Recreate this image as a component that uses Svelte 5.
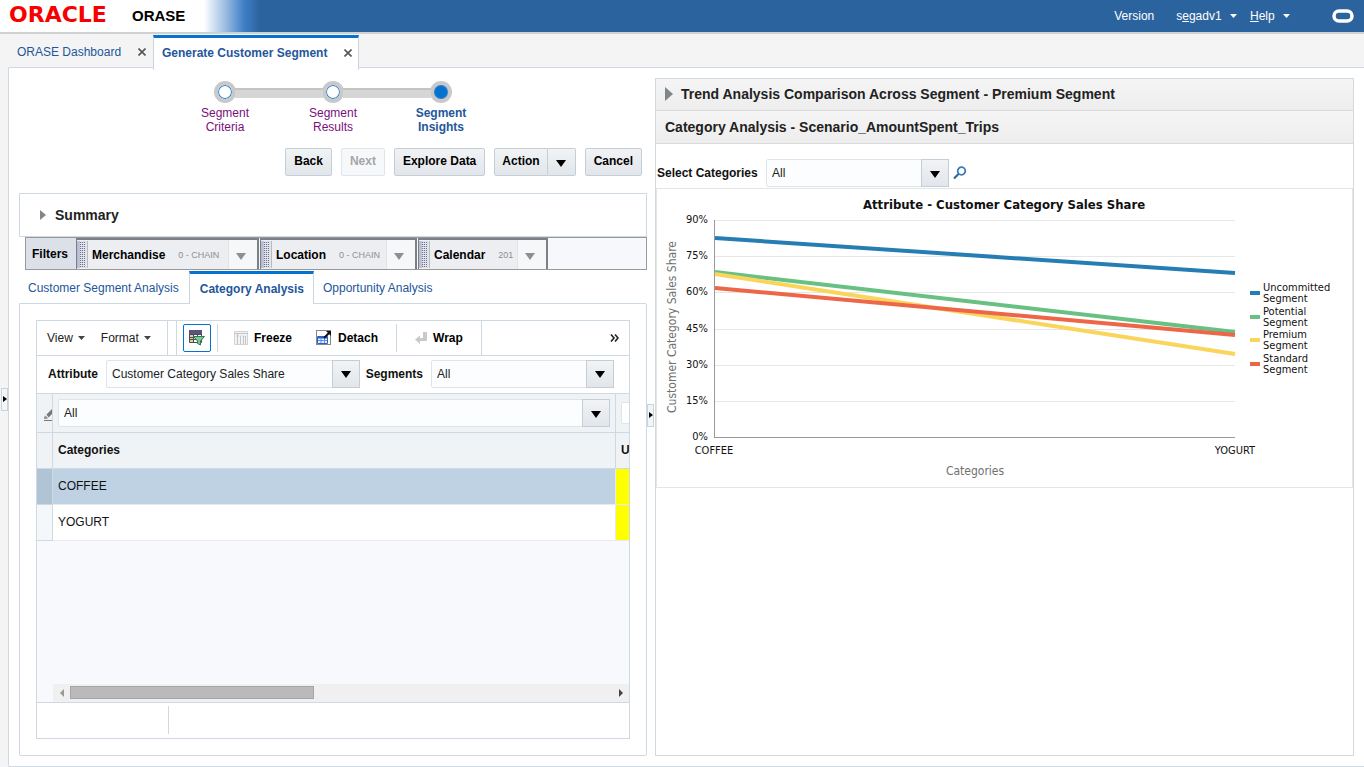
<script lang="ts">
  const steps = [
    { lines: ['Segment', 'Criteria'], current: false },
    { lines: ['Segment', 'Results'], current: false },
    { lines: ['Segment', 'Insights'], current: true },
  ];

  const filters = [
    { name: 'Merchandise', value: '0 - CHAIN', size: 'wide' },
    { name: 'Location', value: '0 - CHAIN', size: 'medium' },
    { name: 'Calendar', value: '201', size: 'narrow' },
  ];

  const subTabs = ['Customer Segment Analysis', 'Category Analysis', 'Opportunity Analysis'];
  let activeTab = $state('Category Analysis');

  const categories = ['COFFEE', 'YOGURT'];
  let selectedCategory = $state('COFFEE');

  // chart geometry
  const left = 58;
  const right = 578;
  const bottom = 248;
  const plotHeight = 217;
  const ticks = [90, 75, 60, 45, 30, 15, 0];

  const series = [
    { name: 'Uncommitted', color: '#267db3', values: [82.7, 68.2], y: 102 },
    { name: 'Potential', color: '#68c182', values: [68.6, 43.6], y: 126 },
    { name: 'Premium', color: '#fad55c', values: [67.8, 34.6], y: 149 },
    { name: 'Standard', color: '#ed6647', values: [62, 42.5], y: 173 },
  ];

  function toY(v: number): number {
    return Math.round(bottom - (v / 90) * plotHeight);
  }
</script>

{#snippet caret()}
  <svg class="caret" width="7" height="4" viewBox="0 0 7 4"><path d="M0 0h7L3.500 4z" fill="currentColor" /></svg>
{/snippet}

{#snippet arrow()}
  <svg width="10" height="7" viewBox="0 0 10 7"><path d="M0 0h10L5 7z" fill="currentColor" /></svg>
{/snippet}

{#snippet combo(id: string, value: string, label: string)}
  <div class="combo">
    <select {id} aria-label={label}><option>{value}</option></select>
    <span class="combo-arrow">{@render arrow()}</span>
  </div>
{/snippet}

<div class="page">
  <header>
    <span class="logo">ORACLE</span>
    <span class="product">ORASE</span>
    <nav>
      <a href="#version">Version</a>
      <a href="#user">s<u>e</u>gadv1 {@render caret()}</a>
      <a href="#help"><u>H</u>elp {@render caret()}</a>
      <svg class="ring" width="22" height="14" viewBox="0 0 22 14"><rect x="2" y="2" width="18" height="10" rx="5" fill="none" stroke="#fff" stroke-width="3.500" /></svg>
    </nav>
  </header>

  <div class="tabs">
    <div class="tab">
      <a href="#dashboard">ORASE Dashboard</a>
      <button class="close" aria-label="Close ORASE Dashboard"><svg width="8" height="8" viewBox="0 0 8 8"><path d="M.5.5l7 7M7.500.5l-7 7" stroke="#555" stroke-width="1.600" /></svg></button>
    </div>
    <div class="tab active">
      <a href="#segment">Generate Customer Segment</a>
      <button class="close" aria-label="Close Generate Customer Segment"><svg width="8" height="8" viewBox="0 0 8 8"><path d="M.5.5l7 7M7.500.5l-7 7" stroke="#555" stroke-width="1.600" /></svg></button>
    </div>
  </div>

  <div class="body">
    <div class="rail">
      <button class="handle" aria-label="Expand side panel"><svg width="4" height="6" viewBox="0 0 4 6"><path d="M0 0v6l4-3z" /></svg></button>
    </div>

    <main>
      <section class="left">
        <ol class="train">
          {#each steps as step}
            <li class:current={step.current}>
              <span class="stop"></span>
              <a href="#step">{step.lines[0]}<br />{step.lines[1]}</a>
            </li>
          {/each}
        </ol>

        <div class="actions">
          <button class="btn">Back</button>
          <button class="btn" disabled>Next</button>
          <button class="btn">Explore Data</button>
          <div class="split">
            <button class="btn">Action</button>
            <button class="btn drop" aria-label="More actions">{@render arrow()}</button>
          </div>
          <button class="btn">Cancel</button>
        </div>

        <div class="summary">
          <svg width="6" height="10" viewBox="0 0 6 10"><path d="M0 0v10l6-5z" fill="#80868a" /></svg>
          <h2>Summary</h2>
        </div>

        <div class="filters">
          <span class="filters-title">Filters</span>
          {#each filters as f}
            <div class="chip {f.size}">
              <span class="grip"></span>
              <b>{f.name}</b>
              <span class="chip-value">{f.value}</span>
              <button class="chip-drop" aria-label="Choose {f.name}">{@render arrow()}</button>
            </div>
          {/each}
        </div>

        <div class="subtabs">
          {#each subTabs as tab}
            <button class:active={tab === activeTab} onclick={() => (activeTab = tab)}>{tab}</button>
          {/each}
        </div>

        <div class="tab-panel">
          <div class="grid-box">
            <div class="toolbar">
              <div class="menus">
                <button>View {@render caret()}</button>
                <button>Format {@render caret()}</button>
              </div>
              <div class="tools">
                <button class="qbe" aria-label="Query by example">
                  <svg width="16" height="16" viewBox="0 0 16 16">
                    <path d="M.5.5h12v12H.5z" fill="#fff" stroke="#4b4a68" />
                    <path d="M0 0h13v4H0z" fill="#56567c" />
                    <path d="M1 5h3v2H1zM1 8h3v1H1zM1 10h3v2H1z" fill="#e3d27c" />
                    <path d="M1 4.500h12M1 7.500h12M1 9.500h9M4.500 4v9M8.500 4v9" stroke="#4b4a68" />
                    <path d="M4.500 6.500h11L11.500 11v4L8.500 13.500V11z" fill="#7cc79a" stroke="#347c50" />
                  </svg>
                </button>
                <button class="tool freeze">
                  <svg width="14" height="14" viewBox="0 0 14 14">
                    <path d="M.5.5h13v13H.5z" fill="#f4f4f4" stroke="#d2d2d2" />
                    <path d="M0 2.500h14M3.500 3v10M6.500 5v8M9.500 5v8M11.500 5v8" stroke="#c5c5c5" />
                    <path d="M2 5h10" stroke="#ccc" stroke-dasharray="1 1" />
                  </svg>
                  Freeze
                </button>
                <button class="tool">
                  <svg width="16" height="16" viewBox="0 0 16 16">
                    <path d="M.5.5h14v14H.5z" fill="#fff" stroke="#111" stroke-dasharray="1 1" />
                    <path d="M1.500 6.500h10v7h-10z" fill="#e4efff" stroke="#2a62c4" />
                    <path d="M2 7.500h9" stroke="#2a62c4" stroke-width="2" />
                    <path d="M2 10.500h9M5 8v5M8.500 8v5" stroke="#5d8ee0" />
                    <path d="M8 8l5-5" stroke="#111" stroke-width="2" />
                    <path d="M10 1h5v5z" fill="#111" />
                  </svg>
                  Detach
                </button>
                <button class="tool wrap">
                  <svg width="12" height="14" viewBox="0 0 12 14"><path d="M8 1h4v9H5v3L0 8.500 5 4.500V7h3z" fill="#c9c9c9" /></svg>
                  Wrap
                </button>
              </div>
              <button class="more" aria-label="More tools">
                <svg width="9" height="8" viewBox="0 0 9 8"><path d="M1 .5L4 4 1 7.500M5 .5L8 4 5 7.500" fill="none" stroke="#222" stroke-width="1.600" /></svg>
              </button>
            </div>

            <div class="selectors">
              <label for="attribute">Attribute</label>
              {@render combo('attribute', 'Customer Category Sales Share', 'Attribute')}
              <label for="segments">Segments</label>
              <div class="segments">{@render combo('segments', 'All', 'Segments')}</div>
            </div>

            <div class="table-area">
              <table>
                <colgroup>
                  <col class="gutter" />
                  <col />
                  <col class="peek" />
                </colgroup>
                <thead>
                  <tr class="query">
                    <td class="eraser">
                      <svg width="8" height="13" viewBox="0 0 8 13"><path d="M0 11.500h8" stroke="#777" /><path d="M0 8l1.500-1.500L4 9l-1 1H0z" fill="#999" /><path d="M2.500 5.500L8 0v5L4.500 8.500z" fill="#777" /></svg>
                    </td>
                    <td>{@render combo('category-query', 'All', 'Filter categories')}</td>
                    <td><input class="peek-input" aria-label="Filter segment" /></td>
                  </tr>
                  <tr>
                    <th></th>
                    <th>Categories</th>
                    <th>U</th>
                  </tr>
                </thead>
                <tbody>
                  {#each categories as c}
                    <tr class:selected={c === selectedCategory} onclick={() => (selectedCategory = c)}>
                      <td></td>
                      <td>{c}</td>
                      <td class="flag"></td>
                    </tr>
                  {/each}
                </tbody>
              </table>
              <div class="scrollbar">
                <button aria-label="Scroll left"><svg width="4" height="8" viewBox="0 0 4 8"><path d="M4 0v8L0 4z" fill="#999" /></svg></button>
                <div class="track"><div class="thumb"></div></div>
                <button aria-label="Scroll right"><svg width="4" height="8" viewBox="0 0 4 8"><path d="M0 0v8l4-4z" fill="#444" /></svg></button>
              </div>
            </div>

            <div class="status"><span></span></div>
          </div>
        </div>
      </section>

      <div class="splitter">
        <button class="handle" aria-label="Collapse panel"><svg width="4" height="6" viewBox="0 0 4 6"><path d="M0 0v6l4-3z" /></svg></button>
      </div>

      <section class="right">
        <div class="panel-head">
          <svg width="8" height="14" viewBox="0 0 8 14"><path d="M0 0v14l8-7z" fill="#80868a" /></svg>
          <h2>Trend Analysis Comparison Across Segment - Premium Segment</h2>
        </div>
        <div class="panel-head">
          <h2>Category Analysis - Scenario_AmountSpent_Trips</h2>
        </div>
        <div class="picker">
          <label for="categories">Select Categories</label>
          {@render combo('categories', 'All', 'Select Categories')}
          <button class="search" aria-label="Search">
            <svg width="14" height="14" viewBox="0 0 14 14"><circle cx="8.500" cy="5" r="3.800" fill="#fff" stroke="#3d79b8" stroke-width="1.800" /><path d="M5.500 8L1 12.500" stroke="#2c66a5" stroke-width="2.200" /></svg>
          </button>
        </div>

        <div class="chart">
          <svg viewBox="0 0 695 298" role="img" aria-label="Customer Category Sales Share by category">
            <text class="title" x="347" y="20" text-anchor="middle">Attribute - Customer Category Sales Share</text>
            {#each ticks as t}
              <line x1={left} x2={right} y1={toY(t) + 0.5} y2={toY(t) + 0.5} stroke={t === 0 ? '#999' : '#e6e6e6'} />
              <text x="51" y={toY(t) + 3} text-anchor="end">{t}%</text>
            {/each}
            <line x1="57.5" x2="57.5" y1="31" y2="249" stroke="#999" />
            {#each series as s}
              <line x1={left} x2={right} y1={toY(s.values[0])} y2={toY(s.values[1])} stroke={s.color} stroke-width="4" />
            {/each}
            <text x="57" y="265" text-anchor="middle">COFFEE</text>
            <text x="578" y="265" text-anchor="middle">YOGURT</text>
            <text class="axis" x="318" y="286" text-anchor="middle">Categories</text>
            <text class="axis" transform="translate(19 138) rotate(-90)" text-anchor="middle">Customer Category Sales Share</text>
            {#each series as s}
              <rect x="593" y={s.y} width="10" height="4" fill={s.color} />
              <text x="606" y={s.y}>{s.name}</text>
              <text x="606" y={s.y + 11}>Segment</text>
            {/each}
          </svg>
        </div>
      </section>
    </main>
  </div>
</div>

<style>
  :global(body) { background: #f4f4f4; }
  .page { min-height: 100vh; display: flex; flex-direction: column; font: 12px/14px "Liberation Sans", Arial, sans-serif; color: #222; }
  .page :global(*) { box-sizing: border-box; }
  button, select, input { font: inherit; color: inherit; margin: 0; padding: 0; border: 0; background: none; }
  button { cursor: pointer; display: inline-flex; align-items: center; justify-content: center; }
  a { text-decoration: none; }
  h2 { margin: 0; font-size: 14px; line-height: 16px; }
  svg { display: block; flex: none; }
  label { font-weight: bold; color: #111; white-space: nowrap; }

  header { height: 34px; display: flex; align-items: center; padding: 0 10px 0 9px; border-bottom: 2px solid #cfd0d2; background: linear-gradient(to right, #fff 204px, #8fb4de 228px, #3f7fc6 244px, #2b639e 260px); }
  .logo { width: 123px; padding-bottom: 2px; font: bold 22px/28px "DejaVu Sans", sans-serif; color: #f80000; }
  .product { font-size: 15px; line-height: 18px; font-weight: bold; color: #000; }
  nav { flex: 1; display: flex; align-items: center; justify-content: flex-end; gap: 13px; color: #fff; }
  nav a { display: flex; align-items: center; color: #fff; white-space: pre; }
  nav a:first-child { margin-right: 9px; }
  nav .ring { margin-left: 29px; }
  .caret { margin-left: 5px; display: inline-block; }

  .tabs { display: flex; height: 33px; padding-left: 9px; }
  .tab { display: flex; align-items: center; justify-content: space-between; width: 144px; padding: 3px 6px 0 8px; }
  .tab.active { width: 206px; height: 35px; margin-top: 1px; padding: 0 5px 3px 8px; background: #fff; border: 1px solid #c9d6e2; border-top: 3px solid #0572ce; border-bottom: 0; font-weight: bold; z-index: 1; }
  .tab a { color: #24569b; white-space: nowrap; }
  .close { width: 10px; height: 12px; }

  .body { flex: 1; display: flex; }
  .rail { width: 8px; display: flex; align-items: center; justify-content: flex-end; padding-bottom: 36px; }
  .handle { width: 7px; height: 23px; background: #f3f5f7; border: 1px solid #c9d3dc; }
  main { flex: 1; display: grid; grid-template-columns: minmax(0, 628fr) 8px minmax(0, 699fr); padding: 10px 10px 10px 10px; background: #fff; border: 1px solid #ced9e3; border-right: 0; border-radius: 2px 0 0 2px; }
  .splitter { display: flex; align-items: center; padding-bottom: 4px; }

  .left { display: flex; flex-direction: column; }
  .train { display: flex; justify-content: center; list-style: none; margin: 3px 0 0; padding: 0; }
  .train li { position: relative; width: 108px; text-align: center; display: flex; flex-direction: column; align-items: center; gap: 4px; }
  .train li + li::before { content: ""; position: absolute; right: 64px; top: 7px; width: 88px; height: 8px; background: #d6d6d6; border-top: 2px solid #c4c4c4; }
  .stop { width: 22px; height: 22px; border: 4px solid #c9c9c9; border-radius: 50%; background: #fff; box-shadow: inset 0 0 0 1px #2a82d4; }
  .current .stop { background: #0572ce; }
  .train li { gap: 3px; }
  .train a { color: #7a0f7c; }
  .train .current a { color: #24569b; font-weight: bold; }

  .actions { display: flex; justify-content: flex-end; gap: 9px; padding: 14px 5px 0 0; }
  .btn { height: 28px; padding: 0 8px 2px; border: 1px solid #c4ced7; border-radius: 2px; background: linear-gradient(#f1f3f5, #e2e6ea); color: #000; font-weight: bold; white-space: nowrap; }
  .btn:disabled { color: #a5a7a9; background: #f6f8f9; border-color: #dfe5ea; cursor: default; }
  .split { display: flex; }
  .split .btn:first-child { padding: 0 7px 2px; border-radius: 2px 0 0 2px; }
  .split .drop { width: 28px; padding: 2px 0 0; border-left: 0; border-radius: 0 2px 2px 0; }

  .summary { display: flex; align-items: center; gap: 9px; height: 44px; margin-top: 17px; padding-left: 20px; border: 1px solid #ced9e3; }

  .filters { display: flex; height: 33px; margin-left: 6px; border: 1px solid #999; background: #f7f8fb; }
  .filters-title { width: 50px; padding: 9px 0 0 6px; background: #dce0e9; font-weight: bold; color: #000; }
  .chip { display: flex; align-items: center; margin-right: 1px; border: 2px solid #7c8084; border-bottom: 0; border-left-width: 1px; background: #edeef2; }
  .chip.wide { width: 183px; }
  .chip.medium { width: 157px; }
  .chip.narrow { width: 130px; }
  .chip b { margin-left: 4px; color: #000; }
  .chip-value { flex: 1; min-width: 0; margin-left: 13px; font-size: 9px; color: #8e8e8e; white-space: nowrap; }
  .grip { width: 11px; height: 27px; flex: none; background: repeating-linear-gradient(#e4e6ee 0 1px, transparent 1px 2px) 3px 0 / 5px 100% no-repeat, repeating-linear-gradient(to right, #6d7190 0 1px, transparent 1px 2px) 3px 0 / 5px 100% no-repeat, linear-gradient(to right, #b4b8cd, #e6e8ef); border-right: 1px solid #bbb; }
  .chip-drop { width: 29px; height: 100%; flex: none; padding: 3px 4px 0 0; background: #f6f7f9; border-left: 1px solid #e2e4e8; color: #8d8f92; }

  .subtabs { display: flex; height: 33px; padding-top: 1px; }
  .subtabs button { padding: 3px 10px 1px 9px; color: #24569b; white-space: nowrap; }
  .subtabs button.active { height: 33px; padding: 0 9px 1px 10px; background: #fff; border: 1px solid #c9d6e2; border-top: 3px solid #0572ce; border-bottom: 0; font-weight: bold; position: relative; }

  .tab-panel { flex: 1; display: flex; padding: 16px; border: 1px solid #ced9e3; border-radius: 0 2px 2px 2px; }
  .grid-box { flex: 1; min-width: 0; display: flex; flex-direction: column; border: 1px solid #ced9e3; }
  .toolbar { display: flex; height: 35px; border-bottom: 1px solid #ced9e3; }
  .menus { display: flex; gap: 16px; width: 131px; padding-left: 10px; border-right: 1px solid #ced9e3; }
  .menus .caret, .menus :global(.caret) { color: #444; }
  .tools { display: flex; align-items: center; margin-left: 8px; padding-left: 6px; border: solid #ced9e3; border-width: 0 1px; }
  .qbe { width: 28px; height: 28px; border: 1px solid #0572ce; border-radius: 2px; }
  .tool { gap: 6px; height: 28px; padding: 0 18px 0 16px; font-weight: bold; color: #000; }
  .freeze { margin-left: 6px; padding-right: 8px; border-left: 1px solid #ced9e3; }
  .wrap { padding-left: 18px; border-left: 1px solid #ced9e3; }
  .more { margin: 0 10px 0 auto; }

  .selectors { display: flex; align-items: center; gap: 6px; height: 38px; padding: 0 15px 2px 11px; border-bottom: 1px solid #ced9e3; }
  .selectors label { padding-right: 2px; }
  .selectors > :global(.combo) { flex: 1; }
  .selectors .segments { width: 183px; }
  .combo { position: relative; display: flex; width: 100%; height: 28px; }
  .combo select { flex: 1; min-width: 0; appearance: none; padding: 0 32px 0 5px; background: #fcfdfe; border: 1px solid #dfe4e7; border-radius: 2px; color: #222; }
  .combo-arrow { position: absolute; top: 0; right: 0; width: 28px; height: 28px; padding-top: 2px; display: flex; align-items: center; justify-content: center; border: 1px solid #c4ced7; background: linear-gradient(#f1f3f5, #e2e6ea); color: #000; pointer-events: none; }

  .table-area { flex: 1; display: flex; flex-direction: column; justify-content: space-between; background: #f7f9fd; }
  table { width: 100%; table-layout: fixed; border-collapse: separate; border-spacing: 0; }
  .gutter { width: 16px; }
  .peek { width: 13px; }
  td, th { height: 36px; padding: 0 0 2px 5px; text-align: left; border: solid #ced9e3; border-width: 0 1px 1px 0; white-space: nowrap; overflow: hidden; color: #111; }
  td:last-child, th:last-child { border-right: 0; }
  thead td, thead th { background: #f0f3f6; }
  .query td { height: 39px; padding: 0 5px; }
  .query td:last-child { padding-right: 0; }
  .query .eraser { padding: 4px 0 0 7px; }
  .peek-input { display: block; width: 20px; height: 22px; background: #fff; border: 1px solid #dfe4e7; border-radius: 2px; }
  tbody td { background: #fff; border-color: #e7ebef; }
  tbody td:first-child { background: #f5f8fb; border-color: #ced9e3; }
  .selected td { background: #bfd2e4; }
  .selected td:first-child { background: #b0c4d5; }
  tbody .flag { background: #ff0; }

  .scrollbar { display: flex; height: 18px; margin-left: 16px; padding-bottom: 1px; background: #f0f0f0; }
  .scrollbar button { width: 17px; }
  .track { flex: 1; padding: 2px 0; }
  .thumb { width: 45%; height: 13px; background: #bababa; border: 1px solid #a5a5a5; }
  .status { height: 36px; padding: 3px 0; border-top: 1px solid #ced9e3; }
  .status span { display: block; width: 132px; height: 28px; border-right: 1px solid #ced9e3; }

  .right { border: 1px solid #d6d9dc; }
  .panel-head { display: flex; align-items: center; gap: 8px; height: 32px; padding: 0 0 1px 9px; border-bottom: 1px solid #d9d9d9; background: linear-gradient(#f5f5f5, #ededed); }
  .panel-head + .panel-head { height: 33px; }
  .picker { display: flex; align-items: center; padding: 15px 0 1px 1px; }
  .picker > :global(.combo) { width: 183px; margin: 0 4px 0 8px; }
  .picker label { width: 101px; }
  .chart { border: 1px solid #e3e5e7; }
  .chart svg { width: 100%; }
  .chart text { font: 11px "DejaVu Sans Condensed", "DejaVu Sans", sans-serif; fill: #111; }
  .chart .title { font-size: 13px; font-weight: bold; }
  .chart .axis { font-size: 12px; fill: #707070; }
</style>
